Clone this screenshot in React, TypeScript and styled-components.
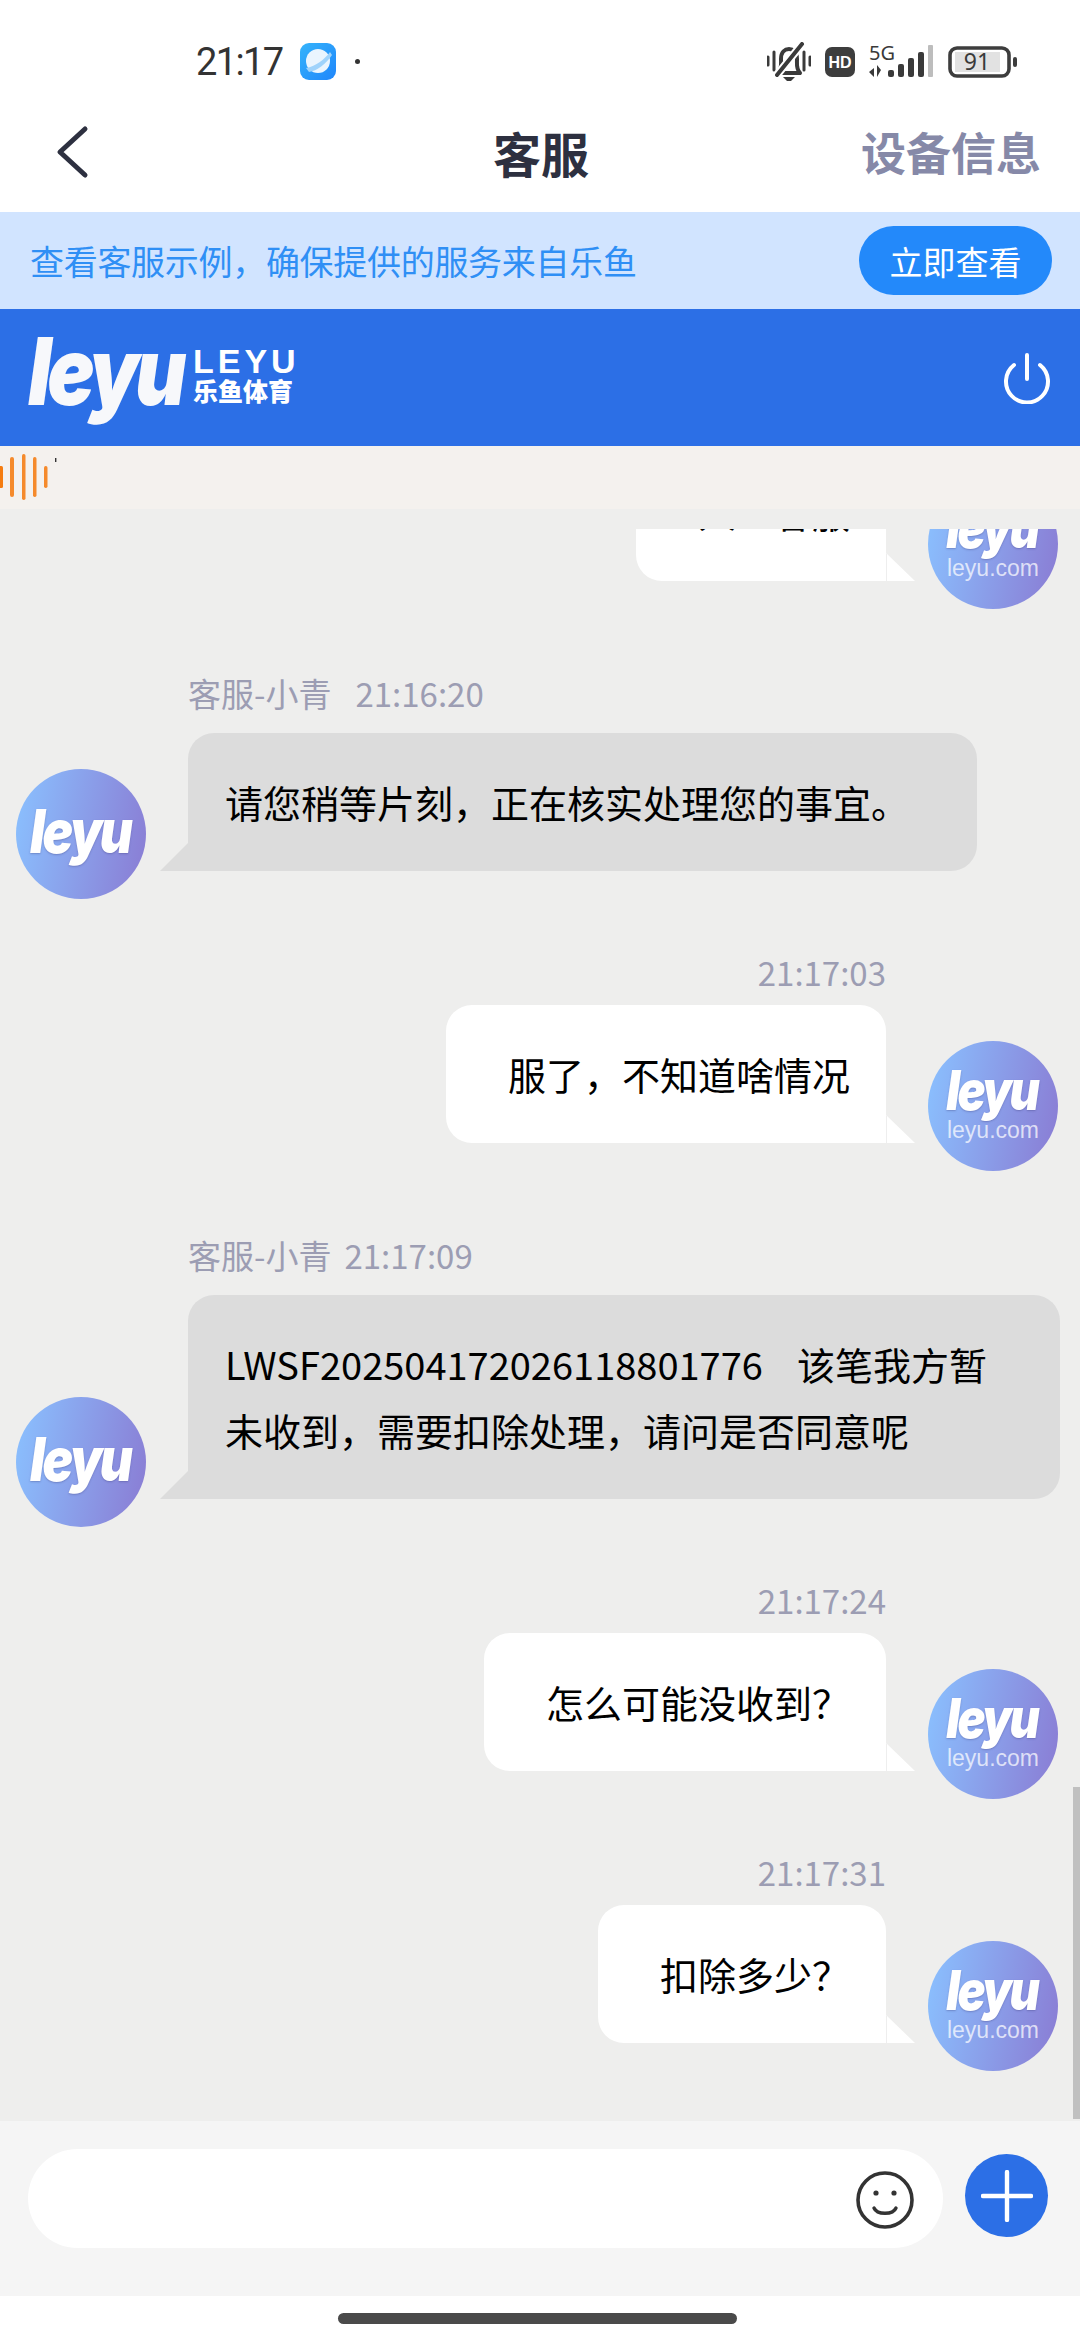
import React from 'react'
import styled, { createGlobalStyle } from 'styled-components'

const GlobalStyle = createGlobalStyle`
    html, body {
        margin: 0;
        padding: 0;
        background: #fff;
    }
    * {
        box-sizing: border-box;
    }
`

const sans = `"Noto Sans CJK SC", "Noto Sans", sans-serif`

const Page = styled.div`
    width: 1080px;
    height: 2340px;
    display: flex;
    flex-direction: column;
    overflow: hidden;
    position: relative;
    font-family: ${sans};
    background: #fff;
`

const StatusBar = styled.div`
    height: 91px;
    flex: none;
    display: flex;
    align-items: center;
    padding: 32px 62px 0 196px;
    color: #333;
`

const Clock = styled.div`
    font-family: Roboto, sans-serif;
    font-size: 38px;
    letter-spacing: -1.6px;
    width: 104px;
`

const AppDot = styled.div`
    width: 5px;
    height: 5px;
    border-radius: 50%;
    background: #333;
    margin-left: 19px;
`

const StatusIcons = styled.div`
    margin-left: auto;
    display: flex;
    align-items: center;
`

const Header = styled.div`
    height: 121px;
    flex: none;
    display: flex;
    align-items: center;
    justify-content: space-between;
    padding: 0 39px 0 55px;
    position: relative;
`

const Title = styled.div`
    position: absolute;
    left: 0;
    right: 0;
    top: 28px;
    padding-left: 2px;
    text-align: center;
    font-size: 48px;
    line-height: 66px;
    font-weight: 700;
    color: #2d3040;
`

const DeviceLink = styled.div`
    font-size: 45px;
    font-weight: 700;
    color: #8689a8;
`

const Banner = styled.div`
    height: 97px;
    flex: none;
    background: #d1e4ff;
    display: flex;
    align-items: center;
    justify-content: space-between;
    padding: 0 28px 0 30px;
`

const BannerText = styled.div`
    font-size: 34px;
    letter-spacing: -0.3px;
    color: #2f8ff5;
`

const BannerButton = styled.div`
    width: 193px;
    height: 69px;
    border-radius: 35px;
    background: #2389fa;
    color: #fff;
    font-size: 33px;
    display: flex;
    align-items: center;
    justify-content: center;
`

const BrandBar = styled.div`
    height: 137px;
    flex: none;
    background: #2c6fe6;
    display: flex;
    align-items: center;
    justify-content: space-between;
    padding: 0 29px 0 28px;
    color: #fff;
`

const Brand = styled.div`
    display: flex;
    align-items: center;
    margin-top: -8px;
`

// the wordmark is narrower than any installed face, so it gets squeezed
const BrandMark = styled.div`
    width: 165px;
    font-family: Inter, sans-serif;
    font-size: 94px;
    line-height: 100px;
    font-weight: 900;
    font-style: italic;
    letter-spacing: -5px;
    color: #f7f8fb;
    transform: translateY(-3px) scaleX(.84);
    transform-origin: left center;
`

const BrandWords = styled.div`
    display: flex;
    flex-direction: column;
    width: 102px;
    margin-top: 2px;
`

const BrandLatin = styled.div`
    font-family: "Liberation Sans", sans-serif;
    font-size: 34px;
    line-height: 30px;
    font-weight: 700;
    letter-spacing: 4px;
`

const BrandCjk = styled.div`
    font-size: 25px;
    line-height: 28px;
    font-weight: 900;
`

const Ticker = styled.div`
    height: 63px;
    flex: none;
    background: #f4f1ee;
`

const ChatArea = styled.div`
    flex: 1;
    min-height: 0;
    padding-top: 20px;
    background: #eeeeed;
    position: relative;
    display: flex;
`

const MessageList = styled.div`
    flex: 1;
    min-width: 0;
    overflow: hidden;
    display: flex;
    flex-direction: column;
    justify-content: flex-end;
    padding-bottom: 50px;
`

const ScrollThumb = styled.div`
    position: absolute;
    right: 0;
    bottom: 2px;
    width: 7px;
    height: 332px;
    background: #c0c0c0;
`

interface SideProps {
    $mine?: boolean
}

const Row = styled.div<SideProps>`
    flex: none;
    display: flex;
    align-items: flex-end;
    flex-direction: ${ props => props.$mine ? 'row-reverse' : 'row' };
    margin-top: ${ props => props.$mine ? '50px' : '61px' };
    padding: ${ props => props.$mine ? '0 22px 0 0' : '0 0 0 16px' };
    gap: 42px;
`

const Body = styled.div<SideProps>`
    display: flex;
    flex-direction: column;
    align-items: ${ props => props.$mine ? 'flex-end' : 'flex-start' };
    padding-bottom: 28px;
`

const Meta = styled.div<SideProps & { $gap?: number }>`
    height: 46px;
    display: flex;
    align-items: center;
    gap: ${ props => props.$gap ?? 0 }px;
    font-size: 33px;
    color: #9c9db3;
    margin-bottom: ${ props => props.$mine ? '10px' : '17px' };
`

const Bubble = styled.div<SideProps>`
    position: relative;
    max-width: 872px;
    font-size: 38px;
    line-height: 66px;
    color: #000;
    white-space: pre-wrap;
    word-break: break-all;
    padding: ${ props => props.$mine ? '36px 36px 36px 62px' : '36px 68px 36px 37px' };
    background: ${ props => props.$mine ? '#fff' : '#dcdcdc' };
    border-radius: ${ props => props.$mine ? '26px 26px 0 26px' : '26px 26px 26px 0' };

    &::after {
        content: '';
        position: absolute;
        bottom: 0;
        width: 28px;
        height: 28px;
        background: ${ props => props.$mine ? '#fff' : '#dcdcdc' };
        ${ props => props.$mine
            ? 'left: 100%; clip-path: polygon(0 0, 100% 100%, 0 100%); border-left: 1px solid #eeeeee;'
            : 'right: 100%; clip-path: polygon(100% 0, 100% 100%, 0 100%);' }
    }
`

const AvatarCircle = styled.div`
    width: 130px;
    height: 130px;
    flex: none;
    border-radius: 50%;
    background: linear-gradient(100deg, #8abcfc 8%, #8a7bd3 100%);
    color: #fff;
    display: flex;
    flex-direction: column;
    align-items: center;
    justify-content: center;
`

const AvatarMark = styled.div<{ $large?: boolean }>`
    font-family: Inter, sans-serif;
    font-weight: 900;
    font-style: italic;
    font-size: ${ props => props.$large ? '60px' : '55px' };
    line-height: 46px;
    letter-spacing: -3px;
    padding-right: 3px;
    transform: translateY(-3px) scaleX(.85);
    text-shadow: 0 1px 2px rgba(60, 60, 120, .35);
`

const AvatarSite = styled.div`
    font-family: "Liberation Sans", sans-serif;
    font-size: 23px;
    line-height: 24px;
    margin-top: 2px;
    color: rgba(255, 255, 255, .72);
`

const Composer = styled.div`
    height: 175px;
    flex: none;
    background: #f5f5f5;
    display: flex;
    align-items: flex-start;
    padding: 28px 32px 0 28px;
    gap: 22px;
`

const InputPill = styled.div`
    width: 917px;
    height: 99px;
    border-radius: 50px;
    background: #fff;
    display: flex;
    align-items: center;
    justify-content: flex-end;
    padding: 3px 29px 0 0;
`

const PlusButton = styled.div`
    width: 83px;
    height: 83px;
    margin-top: 5px;
    border-radius: 50%;
    background: #2c6fe6;
    display: flex;
    align-items: center;
    justify-content: center;
`

const HomeArea = styled.div`
    height: 44px;
    flex: none;
    background: #fff;
    display: flex;
    justify-content: center;
    padding: 17px 6px 0 0;
`

const HomeBar = styled.div`
    width: 399px;
    height: 11px;
    border-radius: 6px;
    background: #4a4a4a;
`

const BackIcon = () => (
    <svg width="36" height="54" viewBox="0 0 36 54" fill="none">
        <path d="M30 4 L5 27 L30 50" stroke="#2d3040" strokeWidth="5" strokeLinecap="round" strokeLinejoin="round" />
    </svg>
)

const BrowserIcon = () => (
    <svg width="36" height="37" viewBox="0 0 36 37">
        <defs>
            <linearGradient id="browserFill" x1="0" y1="0" x2="1" y2="1">
                <stop offset="0" stopColor="#35b4fb" />
                <stop offset="1" stopColor="#1f86fb" />
            </linearGradient>
        </defs>
        <rect width="36" height="37" rx="9" fill="url(#browserFill)" />
        <circle cx="18" cy="18" r="12" fill="#eaf5fe" />
        <path d="M6 25 C15 24 25 16 30 9 L32 12 C26 21 17 28 9 29 Z" fill="#9fd3fb" />
    </svg>
)

const MuteIcon = () => (
    <svg width="44" height="40" viewBox="0 0 44 40" fill="none" stroke="#3a3a3a" strokeLinecap="round">
        <path d="M1 15 V23 M7 10 V28 M37 10 V28 M43 15 V23" strokeWidth="3" />
        <path d="M11 31 C15 27 14 22 14 17 C14 10 18 7 22 7 C26 7 30 10 30 17 C30 22 29 27 33 31 Z" strokeWidth="4" strokeLinejoin="round" />
        <path d="M10 33 L35 2" stroke="#fff" strokeWidth="8" />
        <path d="M10 33 L35 2" strokeWidth="4" />
        <path d="M16 35 H28 L24 39 H20 Z" fill="#3a3a3a" stroke="none" />
    </svg>
)

const HdIcon = () => (
    <svg width="30" height="30" viewBox="0 0 30 30" style={{ marginLeft: 14 }}>
        <rect width="30" height="30" rx="7" fill="#3d3d3d" />
        <text x="15" y="20.5" textAnchor="middle" fontFamily="Liberation Sans" fontWeight="700" fontSize="16" fill="#fff">HD</text>
    </svg>
)

const SignalIcon = () => (
    <svg width="66" height="36" viewBox="0 0 66 36" style={{ marginLeft: 13 }}>
        <text x="1" y="16" fontFamily="Noto Sans" fontSize="20" fill="#3a3a3a">5G</text>
        <path d="M1 28 L6 24 V33 Z M9 21 L13 26 L9 33 Z" fill="#3a3a3a" />
        <rect x="20" y="26" width="6" height="7" rx="2" fill="#3a3a3a" />
        <rect x="30" y="20" width="6" height="13" rx="2" fill="#3a3a3a" />
        <rect x="40" y="14" width="6" height="19" rx="2" fill="#3a3a3a" />
        <rect x="50" y="8" width="6" height="25" rx="2" fill="#3a3a3a" />
        <rect x="60" y="1" width="5" height="32" rx="1" fill="#bdbdbd" />
    </svg>
)

const BatteryIcon = () => (
    <svg width="70" height="32" viewBox="0 0 70 32" style={{ marginLeft: 14 }}>
        <rect x="2" y="2" width="59" height="28" rx="7" fill="none" stroke="#3d3d3d" strokeWidth="3.6" />
        <rect x="7" y="6" width="45" height="20" fill="#e2e2e2" />
        <rect x="65" y="11" width="4" height="10" rx="2" fill="#3d3d3d" />
        <text x="29" y="24" textAnchor="middle" fontFamily="Noto Sans" fontSize="23" fill="#3a3a3a">91</text>
    </svg>
)

const PowerIcon = () => (
    <svg width="48" height="52" viewBox="0 0 48 52" fill="none" stroke="#fff" strokeWidth="4" strokeLinecap="round">
        <path d="M24 3 V27" />
        <path d="M11 13 A21 21 0 1 0 37 13" />
    </svg>
)

const WaveIcon = () => (
    <svg width="60" height="63" viewBox="0 0 60 63" style={{ display: 'block' }}>
        <g fill="#f58a2c">
            <rect x="-1" y="20" width="4" height="22" rx="1.5" fill="#f57c10" />
            <rect x="10" y="11" width="4" height="40" rx="2" />
            <rect x="22" y="8" width="3.5" height="46" rx="1.7" />
            <rect x="33" y="11" width="3.5" height="40" rx="1.7" />
            <rect x="44" y="20" width="3.5" height="22" rx="1.7" />
        </g>
        <rect x="55" y="12" width="1.4" height="4" fill="#333" />
    </svg>
)

const SmileIcon = () => (
    <svg width="58" height="58" viewBox="0 0 58 58" fill="none" stroke="#333" strokeLinecap="round">
        <circle cx="29" cy="29" r="27" strokeWidth="3.6" />
        <circle cx="20" cy="22" r="2.6" fill="#333" stroke="none" />
        <circle cx="38" cy="22" r="2.6" fill="#333" stroke="none" />
        <path d="M18 37 C21 44 37 44 40 37" strokeWidth="3.4" />
    </svg>
)

const PlusIcon = () => (
    <svg width="52" height="52" viewBox="0 0 52 52" stroke="#fff" strokeWidth="4.4" strokeLinecap="round">
        <path d="M26 2 V50 M2 26 H50" />
    </svg>
)

const Avatar: React.FC<{ mine?: boolean }> = ({ mine }) => (
    <AvatarCircle>
        <AvatarMark $large={ !mine }>leyu</AvatarMark>
        { mine && <AvatarSite>leyu.com</AvatarSite> }
    </AvatarCircle>
)

interface ChatMessage {
    mine: boolean
    time?: string
    name?: string
    gap?: number
    text: string
}

const messages: ChatMessage[] = [
    { mine: true, time: '21:16:12', text: '人工客服' },
    { mine: false, name: '客服-小青', time: '21:16:20', gap: 24, text: '请您稍等片刻，正在核实处理您的事宜。' },
    { mine: true, time: '21:17:03', text: '服了，不知道啥情况' },
    { mine: false, name: '客服-小青', time: '21:17:09', gap: 13, text: 'LWSF202504172026118801776    该笔我方暂未收到，需要扣除处理，请问是否同意呢' },
    { mine: true, time: '21:17:24', text: '怎么可能没收到？' },
    { mine: true, time: '21:17:31', text: '扣除多少？' },
]

const App: React.FC = () => {
    return (
        <Page>
            <GlobalStyle />

            <StatusBar>
                <Clock>21:17</Clock>
                <BrowserIcon />
                <AppDot />
                <StatusIcons>
                    <MuteIcon />
                    <HdIcon />
                    <SignalIcon />
                    <BatteryIcon />
                </StatusIcons>
            </StatusBar>

            <Header>
                <BackIcon />
                <Title>客服</Title>
                <DeviceLink>设备信息</DeviceLink>
            </Header>

            <Banner>
                <BannerText>查看客服示例，确保提供的服务来自乐鱼</BannerText>
                <BannerButton>立即查看</BannerButton>
            </Banner>

            <BrandBar>
                <Brand>
                    <BrandMark>leyu</BrandMark>
                    <BrandWords>
                        <BrandLatin>LEYU</BrandLatin>
                        <BrandCjk>乐鱼体育</BrandCjk>
                    </BrandWords>
                </Brand>
                <PowerIcon />
            </BrandBar>

            <Ticker>
                <WaveIcon />
            </Ticker>

            <ChatArea>
                <MessageList>
                    {
                        messages.map((message, index) =>
                            <Row key={ index } $mine={ message.mine }>
                                <Avatar mine={ message.mine } />
                                <Body $mine={ message.mine }>
                                    <Meta $mine={ message.mine } $gap={ message.gap }>
                                        { message.name && <span>{ message.name }</span> }
                                        <span>{ message.time }</span>
                                    </Meta>
                                    <Bubble $mine={ message.mine }>{ message.text }</Bubble>
                                </Body>
                            </Row>
                        )
                    }
                </MessageList>
                <ScrollThumb />
            </ChatArea>

            <Composer>
                <InputPill>
                    <SmileIcon />
                </InputPill>
                <PlusButton>
                    <PlusIcon />
                </PlusButton>
            </Composer>

            <HomeArea>
                <HomeBar />
            </HomeArea>
        </Page>
    )
}

export default App
